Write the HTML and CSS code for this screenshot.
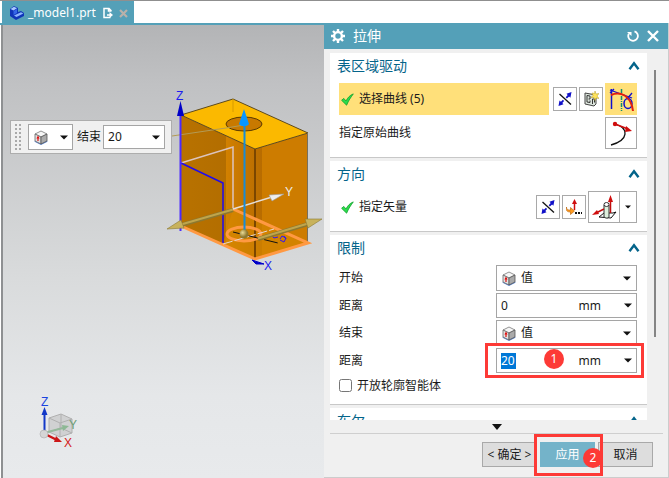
FILE: index.html
```html
<!DOCTYPE html>
<html lang="zh-CN">
<head>
  <meta charset="UTF-8" />
  <meta name="viewport" content="width=device-width, initial-scale=1.0"/>
  <title>_model1.prt - 拉伸</title>
  <link rel="stylesheet" href="styles.css">
</head>
<body>

  <!-- shared icons -->
  <svg class="defs" width="0" height="0" aria-hidden="true">
    <defs>
      <symbol id="chevron" viewBox="0 0 12 10"><path d="M1.5 8.2 6 2.2l4.5 6" fill="none" stroke="#04648a" stroke-width="2.4"/></symbol>
      <symbol id="arrow" viewBox="0 0 8 5"><path d="M0 .5h8L4 4.5z" fill="#111"/></symbol>
      <symbol id="check" viewBox="0 0 13 13"><path d="M.6 7.3 2.8 5.4 5 8C6.6 4.8 8.8 2.2 12.3.9 10 4 7.6 7.5 5.6 12.2Z" fill="#2bdc4c" stroke="#12a02c" stroke-width=".8"/></symbol>
      <symbol id="cube" viewBox="0 0 14 15">
        <path d="M0 11.5 7 15l7-3.5-7-2z" fill="#5f8bdc"/>
        <path d="m1 4 6-3 6 3-6 3z" fill="#f6f6f6" stroke="#777" stroke-width=".8"/>
        <path d="M1 4v7l6 3V7z" fill="#e4e4e4" stroke="#666" stroke-width=".8"/>
        <path d="M13 4v7l-6 3V7z" fill="#aaa" stroke="#555" stroke-width=".8"/>
        <path d="M4 11V7" stroke="#d11" stroke-width="1.2"/>
        <path d="M2.4 8.4 4 5.6l1.6 2.8z" fill="#d11"/>
      </symbol>
      <symbol id="reverse" viewBox="0 0 16 16">
        <path d="m2.5 3 11.5 10.5" stroke="#111" stroke-width="1.3"/>
        <path d="M14.5 1 9.5 2.8l1.2 1.2-2 2.2 1.2 1.2 2.2-2 1.3 1.3zM1.5 15l5-1.800-1.2-1.2 1.8-2-1.2-1.2-2 2L2.500 9.500z" fill="#1010c8"/>
      </symbol>
    </defs>
  </svg>

  <nav class="tabs">
    <div class="tab">
      <svg class="part-icon" viewBox="0 0 16 16">
        <path d="m2 4 4-3 4 2v4l3-1 3 2v3l-8 4-6-4z" fill="#0f35b8"/>
        <path d="m2.500 4 3.500-2.200L9 3.300 5.500 5.500z" fill="#a9c8ff"/>
        <path d="m5.500 6 3.500-2v4L5.500 10z" fill="#3567e8"/>
        <path d="m6 10.500 7-3.200 2.300 1.200L8.500 12z" fill="#8eb6ff"/>
      </svg>
      <a href="#" class="tab-name">_model1.prt</a>
      <svg class="mod-icon" viewBox="0 0 10 12"><path d="M8 4.500V3.500L6 1.500H1v9h6.500M5.500 1.500V4H8M4 8h3" fill="none" stroke="#fff" stroke-width="1.500"/><path d="m6.500 5 3.500 3-3.500 3z" fill="#fff"/></svg>
      <button class="tab-close" aria-label="关闭"><svg viewBox="0 0 9 9"><path d="m1 1 7 7m0-7L1 8" stroke="#b9b1aa" stroke-width="2.2"/></svg></button>
    </div>
  </nav>

  <main class="workspace">
    <section class="viewport">
      <svg class="model" viewBox="3 25 320 260">
        <defs>
          <linearGradient id="left" x1="0" x2="1"><stop offset="0" stop-color="#b87200"/><stop offset="1" stop-color="#b06b00"/></linearGradient>
          <linearGradient id="bore" x1="0" x2="1"><stop offset="0" stop-color="#d28100"/><stop offset=".5" stop-color="#c47500"/><stop offset="1" stop-color="#b86c00"/></linearGradient>
          <radialGradient id="ball" cx=".35" cy=".35"><stop offset="0" stop-color="#eadb96"/><stop offset="1" stop-color="#8c7830"/></radialGradient>
        </defs>
        <!-- block -->
        <path d="m181 115 74 34v110l-74-33z" fill="url(#left)"/>
        <path d="m255 149 53-16v110l-53 16z" fill="#cd7c00"/>
        <path d="m226 136 29 13 7-2v110l-7 2-29-13z" fill="url(#bore)"/>
        <path d="m233 209 75 34-53 16-32-15z" fill="#d78800" opacity=".6"/>
        <path d="m181 115 52-16 75 34-53 16z" fill="#fbb900"/>
        <path d="m181 115 52-16 75 34-53 16z" fill="none" stroke="#5e4a1c"/>
        <path d="M233 99v13" stroke="#d79b00"/>
        <ellipse cx="244" cy="124" rx="18" ry="7" fill="#c87900" stroke="#5a3a00"/>
        <path d="M255 149v110" stroke="#7a4600" stroke-width="2"/>
        <path d="M307.500 133v110" stroke="#77705f"/>
        <path d="m172 136 54-8 18-3" fill="none" stroke="#b39b55"/>
        <!-- sketch -->
        <path d="m181 163 52-16v62" fill="none" stroke="#dcc4be" stroke-width="1.500"/>
        <path d="m181 163 42 20v61" fill="none" stroke="#1e0af0" stroke-width="1.500"/>
        <path d="m181 226 74 33 53-16-75-34" fill="none" stroke="#ff9942" stroke-width="3"/>
        <ellipse cx="244" cy="234" rx="17" ry="7" fill="none" stroke="#ff9942" stroke-width="3"/>
        <path d="m223 244 51-15" stroke="#e7d8cf" stroke-dasharray="10 2"/>
        <path d="m233 232 45 11" stroke="#111" stroke-dasharray="14 2"/>
        <path d="m270 234 4 4 4-1m2 2 2-3 4 2-2 4-4-2m4-4 2 3" fill="none" stroke="#2b15ff"/>
        <!-- axes -->
        <path d="M180.500 110v121" stroke="#4a2aff" stroke-width="2"/>
        <path d="m180.500 101 3.500 15h-7z" fill="#0000c8"/>
        <path d="m233 209 39-12" stroke="#e5dfd9" stroke-width="1.500"/>
        <path d="m269 195 15-1-12 7z" fill="#eee" stroke="#999" stroke-width=".6"/>
        <path d="m252 260 12 4-8 0z" fill="#0000c8" stroke="#0000c8"/>
        <path d="m181 225 52-15" stroke="#8c7830" stroke-width="4"/>
        <path d="m181 224.500 52-15" stroke="#bfa54c" stroke-width="2"/>
        <path d="m167 229 14-9 3 8z" fill="#c8b25c" stroke="#8c7830" stroke-width=".6"/>
        <path d="m258 239 50-15" stroke="#8c7830" stroke-width="4"/>
        <path d="m258 238.500 50-15" stroke="#bfa54c" stroke-width="2"/>
        <path d="m305 219 17 0-14 9z" fill="#c8b25c" stroke="#8c7830" stroke-width=".6"/>
        <path d="M244.500 234V122" stroke="#168cd8" stroke-width="2"/>
        <path d="m244 109 5 15c-2 3-8 3-10 0z" fill="#0996ff"/>
        <circle cx="244" cy="234" r="4.500" fill="url(#ball)"/>
        <text x="176" y="100" class="axis axis-blue">Z</text>
        <text x="285" y="196" class="axis axis-white">Y</text>
        <text x="264" y="270" class="axis axis-blue">X</text>
      </svg>

      <div class="float-bar">
        <span class="grip"></span>
        <button class="limit-btn" aria-label="限制类型">
          <svg class="cube"><use href="#cube"/></svg>
          <svg class="arrow"><use href="#arrow"/></svg>
        </button>
        <label for="floatEnd">结束</label>
        <div class="combo float-combo">
          <input type="text" id="floatEnd" value="20">
          <button class="drop" aria-label="选项"><svg class="arrow"><use href="#arrow"/></svg></button>
        </div>
      </div>

      <svg class="triad" viewBox="0 0 48 58">
        <path d="m14 24 12-4 11 5v14l-12 4-11-5z" fill="#d0d1d2"/>
        <path d="m14 24 12-4 11 5v14l-12 4-11-5zm0 0 11 5 12-4M25 29v14m1-23v14l11 5m-11-5-12 4" fill="none" stroke="#b0b0b0"/>
        <path d="m9 39 19-5" stroke="#94b99a" stroke-width="2"/>
        <path d="m27 31 7 1-6 5z" fill="#8db894"/>
        <path d="M9.500 39V18" stroke="#1238c8" stroke-width="2"/>
        <path d="m9.500 13 3 8h-6z" fill="#1238c8"/>
        <path d="m10 40 12 6" stroke="#cc1717" stroke-width="2.500"/>
        <path d="m21 42 6 6-8 0z" fill="#cc1717"/>
        <circle cx="9" cy="40" r="4" fill="#d5d5d5" stroke="#aaa" stroke-width=".6"/>
        <text x="6" y="12" class="axis axis-z">Z</text>
        <text x="34" y="35" class="axis axis-y">Y</text>
        <text x="29" y="53" class="axis axis-x">X</text>
      </svg>
    </section>

    <form class="dialog">
      <header class="dialog-header">
        <svg class="gear" viewBox="0 0 14 14"><circle cx="7" cy="7" r="3.900" fill="none" stroke="#fff" stroke-width="2.400"/><path d="M7 0v3m0 8v3M0 7h3m8 0h3M2 2l2 2m6 6 2 2M12 2l-2 2M4 10l-2 2" stroke="#fff" stroke-width="2.400"/></svg>
        <h1>拉伸</h1>
        <button type="button" class="head-btn" aria-label="重置"><svg viewBox="0 0 12 12"><path d="M7.500 1.400a4.800 4.800 0 1 1-5.600 2.200" fill="none" stroke="#fff" stroke-width="1.800"/><path d="M0 2h4.500v4z" fill="#fff"/></svg></button>
        <button type="button" class="head-btn" aria-label="关闭"><svg viewBox="0 0 12 12"><path d="m1 1 10 10m0-10L1 11" stroke="#fff" stroke-width="2.400"/></svg></button>
      </header>

      <div class="dialog-body">
        <div class="sections">
          <section class="group">
            <div class="group-title"><h2>表区域驱动</h2><svg class="chevron"><use href="#chevron"/></svg></div>
            <div class="row">
              <div class="pick active"><svg class="check"><use href="#check"/></svg>选择曲线 (5)</div>
              <button type="button" class="tool" aria-label="反向"><svg><use href="#reverse"/></svg></button>
              <button type="button" class="tool" aria-label="绘制截面">
                <svg viewBox="0 0 16 16"><path d="m2 2 11 2v9l-2 2-9-2z" fill="#dce5dc" stroke="#444"/><path d="M4 11V4.500l3 .5v3H5.500M9.500 13V8h2v3.500M4 11l3 .5v-2" fill="none" stroke="#333"/><path d="m12 0 1 3 3-.5-2 2.500 2 2.500-3-.5-1 2.500-1-3H8l2-2-1-2.500 2.500.5z" fill="#ffe45c" stroke="#b39a20" stroke-width=".5"/></svg>
              </button>
              <button type="button" class="tool big active" aria-label="曲线">
                <svg viewBox="0 0 26 26"><path d="M3.500 23V3" stroke="#1010d0" stroke-width="1.500"/><path d="m2 4 22 8M2 7l4-4m13 10 5-6" fill="none" stroke="#1010d0" stroke-width="1.300"/><path d="M13.500 3v22" stroke="#118a74" stroke-width="1.500" stroke-dasharray="4 1 1 1"/><ellipse cx="20" cy="17.500" rx="4" ry="5" fill="none" stroke="#1010d0" stroke-width="1.500"/><path d="M3 9c9-4 20 0 22 16" fill="none" stroke="#e3200c" stroke-width="2"/></svg>
              </button>
            </div>
            <div class="row">
              <div class="pick plain">指定原始曲线</div>
              <button type="button" class="tool big" aria-label="原始曲线">
                <svg viewBox="0 0 26 26"><path d="M7 4c14 4 14 16-4 21" fill="none" stroke="#111" stroke-width="1.300"/><path d="m7 4 13 5" stroke="#d00d0d" stroke-width="1.500"/><path d="m18 6 6 5-7 1z" fill="#d00d0d"/><circle cx="7" cy="4" r="2.200" fill="#d00d0d"/></svg>
              </button>
            </div>
          </section>

          <section class="group">
            <div class="group-title"><h2>方向</h2><svg class="chevron"><use href="#chevron"/></svg></div>
            <div class="row">
              <div class="pick"><svg class="check"><use href="#check"/></svg>指定矢量</div>
              <button type="button" class="tool" aria-label="反向"><svg><use href="#reverse"/></svg></button>
              <button type="button" class="tool" aria-label="矢量对话框">
                <svg viewBox="0 0 16 16"><path d="M8.500 11V4" stroke="#d00d0d" stroke-width="1.500"/><path d="m8.500 0 2.500 5H6z" fill="#d00d0d"/><path d="M.5 8c0 3 2 3 4 3V8.500l4 3.500-4 3.500V13C1.500 13-.5 12 .5 8z" fill="#ff9b20" stroke="#b45c00" stroke-width=".6"/><path d="M9 14h2m1 0h2m1 0h1" stroke="#111" stroke-width="2"/></svg>
              </button>
              <div class="split">
                <button type="button" class="tool big" aria-label="自动判断的矢量">
                  <svg viewBox="0 0 26 26"><path d="m8 23 5-4h9l3-1-5 6z" fill="#fff" stroke="#111"/><path d="M13 11v12c2 1.500 4 1.500 5 0V11" fill="#dcefdc" stroke="#333"/><ellipse cx="15.500" cy="10.500" rx="2.500" ry="2" fill="#fff" stroke="#333"/><path d="M19.500 19V6M13 15l-8 4" stroke="#c00d0d" stroke-width="1.500"/><path d="m19.500 1 2.500 7h-5zM1 21l5-5 2 4z" fill="#d00d0d"/></svg>
                </button>
                <button type="button" class="split-drop" aria-label="更多"><svg><use href="#arrow"/></svg></button>
              </div>
            </div>
          </section>

          <section class="group">
            <div class="group-title"><h2>限制</h2><svg class="chevron"><use href="#chevron"/></svg></div>
            <div class="row">
              <label for="startType">开始</label>
              <div class="combo select">
                <svg class="cube"><use href="#cube"/></svg>
                <select id="startType"><option>值</option></select>
                <svg class="arrow"><use href="#arrow"/></svg>
              </div>
            </div>
            <div class="row">
              <label for="startDist">距离</label>
              <div class="combo">
                <input type="text" id="startDist" value="0">
                <span class="unit">mm</span>
                <button type="button" class="drop" aria-label="选项"><svg class="arrow"><use href="#arrow"/></svg></button>
              </div>
            </div>
            <div class="row">
              <label for="endType">结束</label>
              <div class="combo select">
                <svg class="cube"><use href="#cube"/></svg>
                <select id="endType"><option>值</option></select>
                <svg class="arrow"><use href="#arrow"/></svg>
              </div>
            </div>
            <div class="row">
              <label for="endDist">距离</label>
              <div class="combo marked">
                <input type="text" id="endDist" class="selected" value="20">
                <span class="unit">mm</span>
                <button type="button" class="drop" aria-label="选项"><svg class="arrow"><use href="#arrow"/></svg></button>
                <span class="mark mark-field"></span>
                <span class="badge badge-field">1</span>
              </div>
            </div>
            <div class="row check-row">
              <input type="checkbox" id="openProfile">
              <label for="openProfile">开放轮廓智能体</label>
            </div>
          </section>

          <section class="group">
            <div class="group-title"><h2>布尔</h2><svg class="chevron"><use href="#chevron"/></svg></div>
          </section>
        </div>
        <div class="scrollbar"><div class="thumb"></div></div>
      </div>

      <div class="more"><svg viewBox="0 0 10 6"><path d="M0 0h10L5 6z" fill="#111"/></svg></div>

      <footer class="dialog-footer">
        <button type="button">&lt; 确定 &gt;</button>
        <div class="marked">
          <button type="button" class="primary">应用</button>
          <span class="mark mark-btn"></span>
          <span class="badge badge-btn">2</span>
        </div>
        <button type="button">取消</button>
      </footer>
    </form>
  </main>

</body>
</html>
```

FILE: styles.css
```css
* { box-sizing: border-box; margin: 0; padding: 0; }
body {
  height: 100vh;
  display: flex;
  flex-direction: column;
  overflow: hidden;
  background: #fff;
  color: #1a1a1a;
  font: 12px/16px "Noto Sans", "Noto Sans CJK SC", sans-serif;
}
button, input, select { font: inherit; color: inherit; }
button { border: none; background: none; display: flex; align-items: center; justify-content: center; }
svg { display: block; flex: none; }
.defs { position: absolute; }
.arrow { width: 8px; height: 5px; }
.cube { width: 14px; height: 15px; }

/* document tabs */
.tabs {
  flex: none;
  height: 25px;
  padding-left: 2px;
  border-top: 1px solid #8f8f8f;
  border-bottom: 2px solid #54a0b8;
  display: flex;
}
.tab { height: 24px; padding: 0 6px; background: #54a0b8; display: flex; align-items: center; }
.part-icon { width: 16px; height: 16px; margin-right: 4px; }
.tab-name { color: #fff; font-size: 12px; text-decoration: none; }
.mod-icon { width: 10px; height: 12px; margin: 0 6px 0 7px; }
.tab-close svg { width: 9px; height: 9px; }

.workspace { flex: 1; min-height: 0; display: flex; }
.viewport {
  flex: 1;
  min-width: 0;
  position: relative;
  overflow: hidden;
  margin-left: 1px;
  border-left: 2px solid #8e9092;
  background: linear-gradient(#b3b4b6, #c0c1c3 13%, #d9dbdc 56%, #e5e7e9 82%, #e8eaec);
}
.model { width: 320px; height: 260px; }
.triad { position: absolute; left: 32px; bottom: 26px; width: 48px; height: 58px; }
.axis { font: 12px "Liberation Sans", sans-serif; }
.axis-blue { fill: #1d1df0; }
.axis-white { fill: #eee; }
.axis-z { fill: #1a44e0; }
.axis-y { fill: #6a9c75; }
.axis-x { fill: #d42020; }

.float-bar {
  position: absolute;
  left: 7px;
  top: 95px;
  height: 34px;
  padding: 0 6px 0 3px;
  border: 1px solid #adadad;
  background: #f0f0f0;
  display: flex;
  align-items: center;
}
.grip { width: 8px; height: 28px; margin-right: 6px; background: radial-gradient(circle, #aaa 1px, transparent 1px) 0 0 / 4px 4px; }
.limit-btn { width: 45px; height: 26px; margin-right: 4px; gap: 12px; border: 1px solid #a5a5a5; background: #fff; }
.float-bar label { margin-right: 2px; }

/* dialog */
.dialog { flex: 0 0 345px; margin-top: -2px; position: relative; background: #f0f0f0; border-right: 1px solid #ccc; border-bottom: 1px solid #ccc; display: flex; flex-direction: column; }
.dialog-header { height: 26px; padding: 0 9px 0 7px; background: #54a0b8; color: #fff; display: flex; align-items: center; }
.gear { width: 14px; height: 14px; margin-right: 8px; }
.dialog-header h1 { flex: 1; font-size: 14px; font-weight: 400; line-height: 20px; }
.head-btn { margin-left: 8px; }
.head-btn svg { width: 12px; height: 12px; }

.dialog-body { flex: 1; min-height: 0; margin-top: 4px; padding-left: 6px; display: flex; }
.sections { flex: 1; min-width: 0; overflow: hidden; }
.group { margin-bottom: 3px; padding: 0 10px 8px 9px; background: #fff; border-bottom: 1px solid #c8c8c8; }
.group-title { height: 26px; margin: 0 -4px 4px -2px; padding-right: 1px; display: flex; align-items: center; justify-content: space-between; }
.group-title h2 { color: #04648a; font-size: 14px; font-weight: 400; line-height: 20px; }
.chevron { width: 12px; height: 10px; }
.row { display: flex; align-items: center; gap: 2px; }
.row + .row { margin-top: 2px; }
.row > label { flex: 1; }
.pick { flex: 1; height: 32px; padding-left: 2px; margin-right: 2px; display: flex; align-items: center; }
.pick.plain { padding-left: 0; }
.active { background: #ffe07a; }
.check { width: 13px; height: 13px; margin-right: 5px; }
.tool { flex: none; width: 24px; height: 24px; border: 1px solid #a9a9a9; background: #fff; }
.tool svg { width: 16px; height: 16px; }
.tool.big { width: 32px; height: 32px; }
.tool.big svg { width: 26px; height: 26px; }
.tool.active { background: #ffe07a; border-color: #ffe07a; }
.split { display: flex; }
.split-drop { width: 17px; border: 1px solid #a9a9a9; border-left: none; background: #fff; }
.split-drop svg { width: 6px; height: 4px; }

.combo { flex: none; width: 141px; height: 25px; padding: 0 4px; border: 1px solid #a5a5a5; background: #fff; display: flex; align-items: center; }
.combo.select { height: 26px; padding: 0 5px; }
.combo input { flex: 1; min-width: 0; width: 0; border: none; outline: none; background: none; }
.combo select { flex: 1; min-width: 0; padding-left: 5px; border: none; outline: none; background: none; appearance: none; }
.combo input.selected { flex: none; width: 15px; margin-right: auto; background: #0078d7; color: #fff; }
.unit { margin-right: 23px; }
.float-combo { width: 62px; height: 24px; }
.check-row { height: 21px; gap: 5px; }
.check-row input { width: 13px; height: 13px; }

.scrollbar { width: 21px; padding: 17px 12px 0 7px; }
.thumb { height: 267px; background: #858585; }

.more { height: 14px; margin: 0 5px 0 6px; border-bottom: 1px solid #cfcfcf; display: flex; align-items: center; justify-content: center; }
.more svg { width: 10px; height: 6px; }
.dialog-footer { padding: 8px 15px 10px; display: flex; justify-content: flex-end; gap: 3px; }
.dialog-footer button { width: 55px; height: 25px; border: 1px solid #a9a9a9; background: #ddd; white-space: nowrap; }
.dialog-footer .primary { border-color: #74b3c9; background: #74b3c9; color: #fff; }

/* numbered step marks */
.marked { position: relative; }
.mark { position: absolute; border: 3px solid #fd3a36; pointer-events: none; }
.mark-field { inset: -6px -8px -6px -12px; }
.mark-btn { inset: -8px -8px -9px -6px; z-index: 1; }
.badge { position: absolute; z-index: 2; width: 20px; height: 20px; border-radius: 50%; background: #fd3a36; color: #fff; line-height: 20px; text-align: center; }
.badge-field { left: 47px; top: 0; }
.badge-btn { right: -8px; top: 6px; }
```
